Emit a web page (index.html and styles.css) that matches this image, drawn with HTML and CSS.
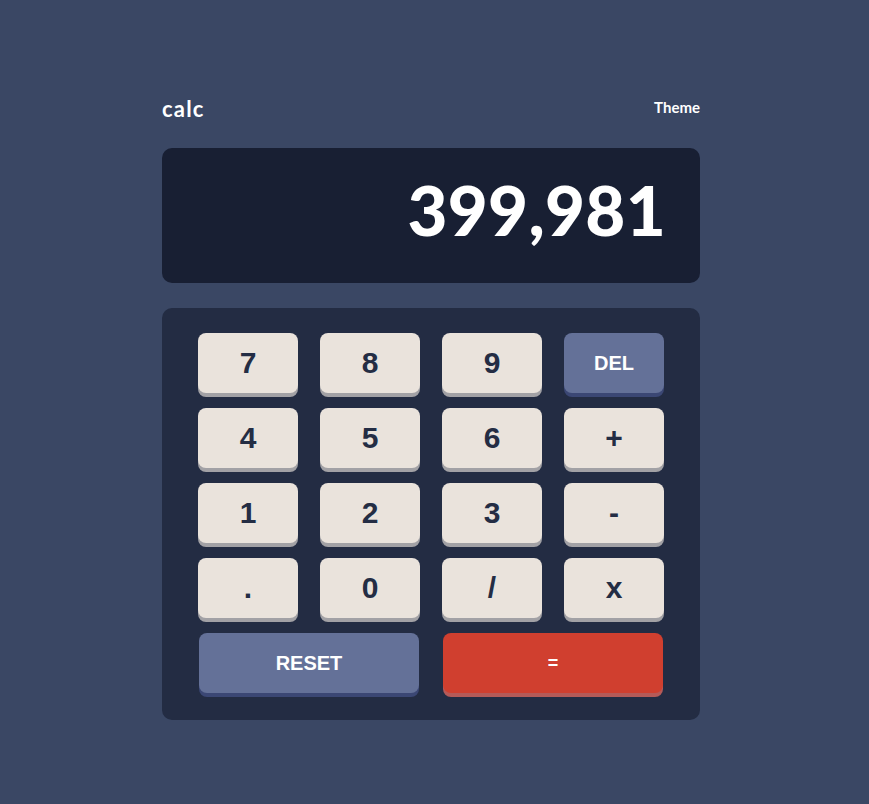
FILE: index.html
```html
<!DOCTYPE html>
<html lang="en">
<head>
<meta charset="utf-8">
<title>calc</title>
<link rel="stylesheet" href="styles.css">
</head>
<body>
<main class="calc">
  <header class="calc-header">
    <h1 class="logo">calc</h1>
    <span class="theme">Theme</span>
  </header>
  <section class="screen">
    <output class="screen-value">399,981</output>
  </section>
  <section class="keypad">
    <button class="key">7</button>
    <button class="key">8</button>
    <button class="key">9</button>
    <button class="key key-blue">DEL</button>
    <button class="key">4</button>
    <button class="key">5</button>
    <button class="key">6</button>
    <button class="key">+</button>
    <button class="key">1</button>
    <button class="key">2</button>
    <button class="key">3</button>
    <button class="key">-</button>
    <button class="key">.</button>
    <button class="key">0</button>
    <button class="key">/</button>
    <button class="key">x</button>
    <button class="key key-blue key-wide">RESET</button>
    <button class="key key-red key-wide key-equals">=</button>
  </section>
</main>
</body>
</html>
```
FILE: styles.css
```css
* { box-sizing: border-box; }
html, body { margin: 0; padding: 0; }
body {
  background: #3a4764;
  min-height: 804px;
  font-family: "Liberation Sans", Arial, sans-serif;
}
.calc {
  width: 538px;
  margin: 0 0 0 162px;
  padding-top: 96px;
}
.calc-header {
  display: flex;
  justify-content: space-between;
  align-items: flex-start;
  height: 52px;
  color: #ffffff;
}
.logo {
  margin: 0;
  font-family: "Lato", sans-serif;
  font-weight: 700;
  font-size: 22px;
  letter-spacing: 1.2px;
  line-height: 26px;
}
.theme {
  font-family: "Lato", sans-serif;
  font-weight: 700;
  font-size: 15px;
  line-height: 22px;
}
.screen {
  height: 135px;
  background: #181f33;
  border-radius: 10px;
  display: flex;
  align-items: center;
  justify-content: flex-end;
  padding: 0 34px 12px 0;
}
.screen-value {
  font-family: "Lato", sans-serif;
  font-weight: 900;
  font-size: 69px;
  color: #ffffff;
  letter-spacing: 0.3px;
  line-height: 1;
}
.keypad {
  margin-top: 25px;
  height: 412px;
  background: #232c43;
  border-radius: 10px;
  padding: 25px 36px 22px;
  display: grid;
  grid-template-columns: repeat(4, 100px);
  grid-auto-rows: 60px;
  column-gap: 22px;
  row-gap: 15px;
}
.key {
  border: 0;
  border-radius: 8px;
  background: #eae3dc;
  color: #242d44;
  font-family: "Liberation Sans", Arial, sans-serif;
  font-weight: 700;
  font-size: 30px;
  box-shadow: 0 4px 0 #a2a1a5;
  padding: 0;
}
.key-blue {
  background: #647198;
  color: #ffffff;
  font-size: 20px;
  box-shadow: 0 4px 0 #3b4774;
}
.key-red {
  background: #d03f2f;
  color: #ffffff;
  font-size: 20px;
  box-shadow: 0 4px 0 #b55a58;
}
.key-equals {
  font-size: 18px;
}
.key-wide {
  grid-column: span 2;
  margin: 0 1px;
}
```
